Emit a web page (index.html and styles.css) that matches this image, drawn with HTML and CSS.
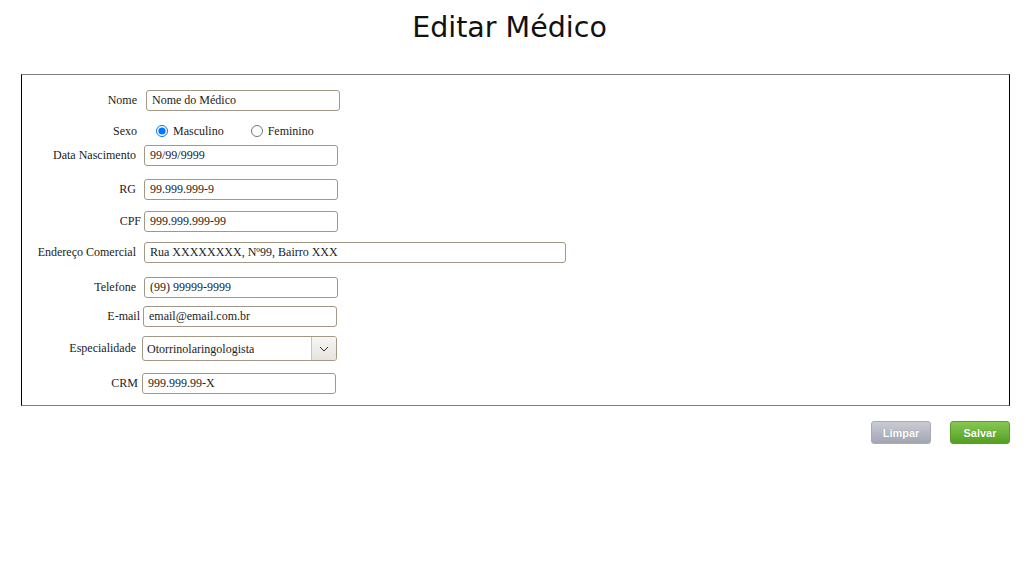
FILE: index.html
```html
<!DOCTYPE html>
<html lang="pt-BR">
<head>
<meta charset="utf-8">
<title>Editar Médico</title>
<link rel="stylesheet" href="styles.css">
</head>
<body>
<h1 class="title">Editar Médico</h1>
<form class="form-box">
  <div class="row row-nome">
    <label class="lbl">Nome</label>
    <input class="field" type="text" value="Nome do Médico">
  </div>
  <div class="row row-sexo">
    <label class="lbl">Sexo</label>
    <div class="radios">
      <label class="radio"><input type="radio" name="sexo" checked> Masculino</label>
      <label class="radio"><input type="radio" name="sexo"> Feminino</label>
    </div>
  </div>
  <div class="row row-data">
    <label class="lbl">Data Nascimento</label>
    <input class="field" type="text" value="99/99/9999">
  </div>
  <div class="row row-rg">
    <label class="lbl">RG</label>
    <input class="field" type="text" value="99.999.999-9">
  </div>
  <div class="row row-cpf">
    <label class="lbl">CPF</label>
    <input class="field" type="text" value="999.999.999-99">
  </div>
  <div class="row row-end">
    <label class="lbl">Endereço Comercial</label>
    <input class="field field-wide" type="text" value="Rua XXXXXXXX, Nº99, Bairro XXX">
  </div>
  <div class="row row-tel">
    <label class="lbl">Telefone</label>
    <input class="field" type="text" value="(99) 99999-9999">
  </div>
  <div class="row row-email">
    <label class="lbl">E-mail</label>
    <input class="field" type="text" value="email@email.com.br">
  </div>
  <div class="row row-esp">
    <label class="lbl">Especialidade</label>
    <div class="select-wrap">
      <select class="select">
        <option>Otorrinolaringologista</option>
      </select>
      <span class="select-btn">
        <svg width="10" height="6" viewBox="0 0 10 6"><path d="M1 1 L5 5 L9 1" fill="none" stroke="#333" stroke-width="1"/></svg>
      </span>
    </div>
  </div>
  <div class="row row-crm">
    <label class="lbl">CRM</label>
    <input class="field" type="text" value="999.999.99-X">
  </div>
</form>
<div class="actions">
  <button class="btn btn-gray" type="button">Limpar</button>
  <button class="btn btn-green" type="button">Salvar</button>
</div>
</body>
</html>
```

FILE: styles.css
```css
html, body {
  margin: 0;
  padding: 0;
  background: #fff;
}
body {
  font-family: "Liberation Serif", "Times New Roman", serif;
  font-size: 12px;
  color: #222;
}
.title {
  margin: 0;
  padding: 10px 17px 0 0;
  height: 74px;
  box-sizing: border-box;
  text-align: center;
  font-family: "DejaVu Sans", Verdana, sans-serif;
  font-weight: normal;
  font-size: 28.5px;
  line-height: 36px;
  color: #111;
}
.form-box {
  margin: 0 26px 0 21px;
  border-top: 1px solid #7f7f7f;
  border-bottom: 1px solid #7f7f7f;
  border-left: 1px solid #000;
  border-right: 1px solid #000;
  padding: 15px 0 11px 0;
  display: flex;
  flex-direction: column;
}
.row {
  display: flex;
  align-items: center;
  gap: 8px;
}
.lbl {
  width: 114px;
  text-align: right;
  flex: none;
}
.row-sexo { margin-top: 10px; height: 20px; }
.row-data { margin-top: 4px; }
.row-rg { margin-top: 13px; }
.row-cpf { margin-top: 11px; }
.row-end { margin-top: 10px; }
.row-tel { margin-top: 14px; }
.row-email { margin-top: 8px; }
.row-esp { margin-top: 9px; }
.row-crm { margin-top: 12px; }

.row-nome .lbl { width: 115px; margin-right: 1px; }
.row-sexo .lbl { width: 115px; }
.row-cpf .lbl { width: 119px; }
.row-cpf { gap: 3px; }
.row-email { gap: 3px; }
.row-email .lbl { width: 118px; }
.row-esp { gap: 6px; }
.row-crm { gap: 4px; }
.row-crm .lbl { width: 116px; }

.field {
  width: 194px;
  height: 21px;
  box-sizing: border-box;
  border: 1px solid #a39886;
  border-radius: 3px;
  padding: 0 5px;
  font-family: "Liberation Serif", "Times New Roman", serif;
  font-size: 12px;
  color: #222;
  background: #fff;
  outline: none;
}
.field-wide { width: 422px; }

.radios {
  display: flex;
  align-items: center;
  gap: 25px;
  padding-left: 9px;
}
.radio {
  display: flex;
  align-items: center;
  gap: 3px;
}
.radio input {
  margin: 0 2px 0 2px;
  width: 12px;
  height: 12px;
  accent-color: #0075ff;
}

.select-wrap {
  position: relative;
  width: 195px;
  height: 25px;
}
.select {
  appearance: none;
  -webkit-appearance: none;
  width: 100%;
  height: 100%;
  box-sizing: border-box;
  border: 1px solid #a39886;
  border-radius: 3px;
  padding: 0 4px;
  font-family: "Liberation Serif", "Times New Roman", serif;
  font-size: 12px;
  color: #222;
  background: #fff;
  outline: none;
}
.select-btn {
  position: absolute;
  top: 1px;
  right: 1px;
  bottom: 1px;
  width: 24px;
  border-left: 1px solid #c9c3b8;
  border-radius: 0 2px 2px 0;
  background: linear-gradient(#f7f6f3, #e6e3dc);
  display: flex;
  align-items: center;
  justify-content: center;
  pointer-events: none;
}

.actions {
  display: flex;
  justify-content: flex-end;
  gap: 19px;
  margin: 15px 26px 0 0;
}
.btn {
  width: 60px;
  height: 23px;
  border-radius: 3px;
  font-family: "Liberation Sans", Arial, sans-serif;
  font-weight: bold;
  font-size: 11px;
  color: #fff;
  padding: 0;
  cursor: pointer;
  text-shadow: 0 0 1px rgba(0,0,0,0.25);
}
.btn-gray {
  border: 1px solid #a8abb5;
  background: linear-gradient(#c9ccd4, #a2a6b3);
}
.btn-green {
  border: 1px solid #5b9d2c;
  background: linear-gradient(#86c852, #53a022);
}
```
